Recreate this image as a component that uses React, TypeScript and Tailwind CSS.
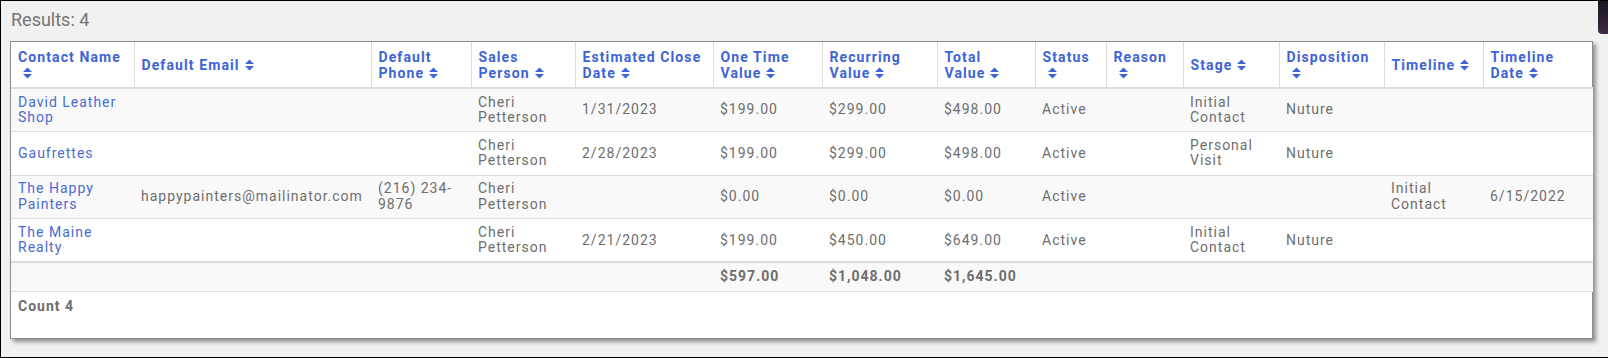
import React from 'react';

type Row = {
  name: string;
  email?: string;
  phone?: string;
  sales: string;
  close?: string;
  oneTime: string;
  recurring: string;
  total: string;
  status: string;
  reason?: string;
  stage?: string;
  disposition?: string;
  timeline?: string;
  timelineDate?: string;
};

// "lines" forces the header wrap where the original breaks it
const columns = [
  { lines: ['Contact Name'], w: 'w-[123px]' },
  { lines: ['Default Email'], w: 'w-[237px]' },
  { lines: ['Default Phone'], w: 'w-[100px]' },
  { lines: ['Sales Person'], w: 'w-[104px]' },
  { lines: ['Estimated Close Date'], w: 'w-[138px]' },
  { lines: ['One Time Value'], w: 'w-[109px]' },
  { lines: ['Recurring Value'], w: 'w-[115px]' },
  { lines: ['Total', 'Value'], w: 'w-[98px]' },
  { lines: ['Status'], w: 'w-[71px]' },
  { lines: ['Reason'], w: 'w-[77px]' },
  { lines: ['Stage'], w: 'w-[96px]' },
  { lines: ['Disposition'], w: 'w-[105px]' },
  { lines: ['Timeline'], w: 'w-[99px]' },
  { lines: ['Timeline Date'], w: 'w-[110px]' },
];

const rows: Row[] = [
  {
    name: 'David Leather Shop',
    sales: 'Cheri Petterson',
    close: '1/31/2023',
    oneTime: '$199.00',
    recurring: '$299.00',
    total: '$498.00',
    status: 'Active',
    stage: 'Initial Contact',
    disposition: 'Nuture',
  },
  {
    name: 'Gaufrettes',
    sales: 'Cheri Petterson',
    close: '2/28/2023',
    oneTime: '$199.00',
    recurring: '$299.00',
    total: '$498.00',
    status: 'Active',
    stage: 'Personal Visit',
    disposition: 'Nuture',
  },
  {
    name: 'The Happy Painters',
    email: 'happypainters@mailinator.com',
    phone: '(216) 234-9876',
    sales: 'Cheri Petterson',
    oneTime: '$0.00',
    recurring: '$0.00',
    total: '$0.00',
    status: 'Active',
    timeline: 'Initial Contact',
    timelineDate: '6/15/2022',
  },
  {
    name: 'The Maine Realty',
    sales: 'Cheri Petterson',
    close: '2/21/2023',
    oneTime: '$199.00',
    recurring: '$450.00',
    total: '$649.00',
    status: 'Active',
    stage: 'Initial Contact',
    disposition: 'Nuture',
  },
];

function SortIcon() {
  return (
    <svg width="9" height="12" viewBox="0 0 9 12" className="inline-block align-[-1px] ml-[5px]">
      <path d="M0 5 L4.5 0.5 L9 5 Z" fill="currentColor" />
      <path d="M0 7 L4.5 11.5 L9 7 Z" fill="currentColor" />
    </svg>
  );
}

export default function App() {
  const cell = 'px-[7px] align-middle';
  return (
    <div className="relative w-[1608px] h-[358px] bg-[#f1f1f1] border-l border-t border-b border-black font-['Roboto',sans-serif] tracking-[1px]">
      <div className="absolute top-0 right-0 w-[10px] h-[33px] bg-gradient-to-b from-[#1b1420] to-[#3a2e44] rounded-bl-sm" />
      <div className="pl-[10px] pt-[7px] text-[18px] leading-[24px] text-[#757575] tracking-normal">Results: 4</div>
      <div className="ml-[9px] mt-[9px] w-[1583px] h-[298px] bg-white border border-[#8c8c8c] shadow-[3px_3px_4px_rgba(0,0,0,0.4)]">
        <table className="table-fixed w-[1581px] border-collapse text-[14px] leading-[15.5px]">
          <colgroup>
            {columns.map((c) => (
              <col key={c.lines.join(' ')} className={c.w} />
            ))}
          </colgroup>
          <thead>
            <tr className="h-[46px] border-b-2 border-[#dddddd]">
              {columns.map((c, i) => (
                <th
                  key={c.lines.join(' ')}
                  className={`${cell} text-left font-bold text-[#3d63d6] leading-[16px] tracking-[1.1px] ${i > 0 ? 'border-l border-[#dddddd]' : ''}`}
                >
                  {c.lines.map((line, j) => (
                    <React.Fragment key={line}>
                      {j > 0 && <br />}
                      {line}
                    </React.Fragment>
                  ))}
                  <SortIcon />
                </th>
              ))}
            </tr>
          </thead>
          <tbody className="text-[#6e6e6e]">
            {rows.map((r, i) => (
              <tr key={r.name} className={`h-[43.6px] border-b border-[#dddddd] ${i % 2 === 0 ? 'bg-[#f9f9f9]' : 'bg-white'}`}>
                <td className={`${cell} text-[#4a6cd2]`}>{r.name}</td>
                <td className={cell}>{r.email}</td>
                <td className={cell}>{r.phone}</td>
                <td className={cell}>{r.sales}</td>
                <td className={cell}>{r.close}</td>
                <td className={cell}>{r.oneTime}</td>
                <td className={cell}>{r.recurring}</td>
                <td className={cell}>{r.total}</td>
                <td className={cell}>{r.status}</td>
                <td className={cell}>{r.reason}</td>
                <td className={cell}>{r.stage}</td>
                <td className={cell}>{r.disposition}</td>
                <td className={cell}>{r.timeline}</td>
                <td className={cell}>{r.timelineDate}</td>
              </tr>
            ))}
            <tr className="h-[29px] border-t-2 border-b border-[#dddddd] bg-[#f9f9f9] font-bold">
              <td colSpan={5} />
              <td className={cell}>$597.00</td>
              <td className={cell}>$1,048.00</td>
              <td className={cell}>$1,645.00</td>
              <td colSpan={6} />
            </tr>
          </tbody>
        </table>
        <div className="px-[7px] pt-[4px] text-[14px] font-bold text-[#6e6e6e]">Count 4</div>
      </div>
    </div>
  );
}
